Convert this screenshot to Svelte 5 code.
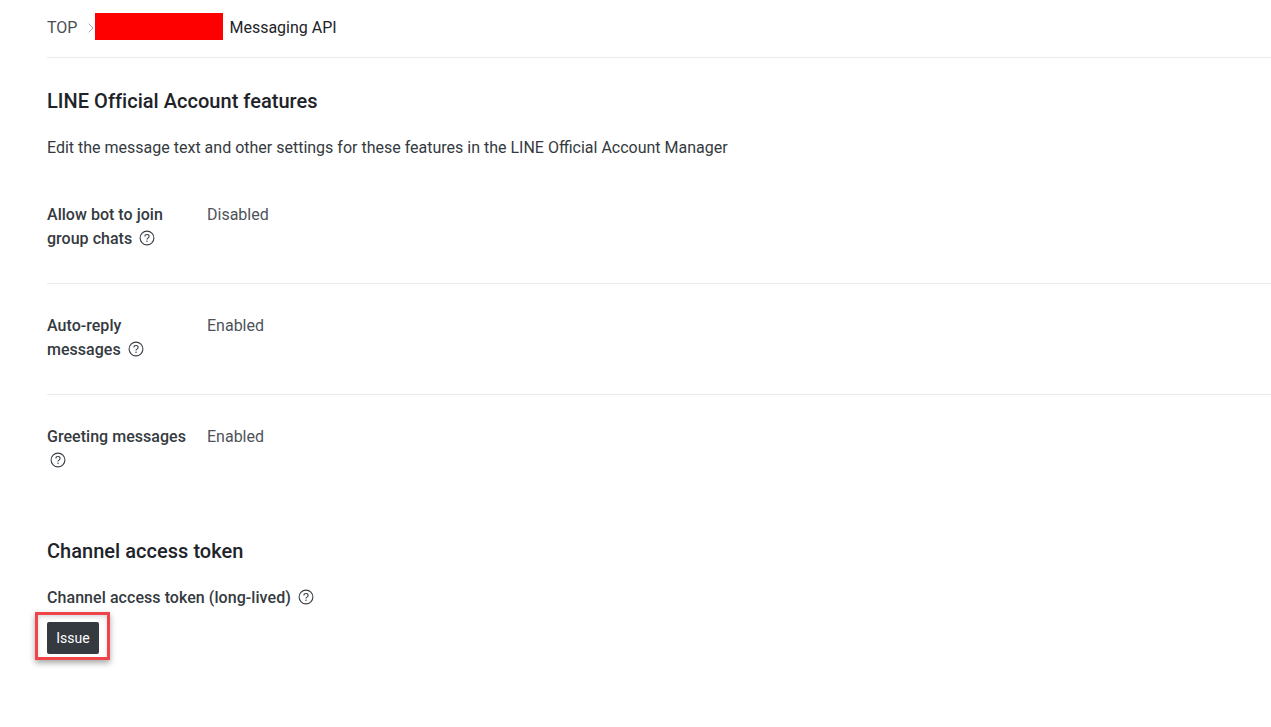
<script>
  const rows = [
    { label: 'Allow bot to join group chats', value: 'Disabled' },
    { label: 'Auto-reply messages', value: 'Enabled' },
    { label: 'Greeting messages', value: 'Enabled' }
  ];
</script>

{#snippet help()}
  <svg class="help" width="16" height="16" viewBox="0 0 16 16" aria-hidden="true">
    <circle cx="8" cy="8" r="6.9" fill="none" stroke="#3a3f46" stroke-width="1.1" />
    <path d="M5.9 6.4c0-1.2.9-1.9 2.1-1.9s2.1.7 2.1 1.8c0 .9-.5 1.3-1.2 1.8-.6.4-.9.7-.9 1.4" fill="none" stroke="#3a3f46" stroke-width="1.1" />
    <circle cx="8" cy="11.3" r=".75" fill="#3a3f46" />
  </svg>
{/snippet}

<div class="page">
  <nav class="crumbs">
    <span class="top">TOP</span>
    <svg class="chev" width="6" height="10" viewBox="0 0 6 10" aria-hidden="true"><path d="M.7.7 5 5 .7 9.3" fill="none" stroke="#a3a7ac" stroke-width="1" /></svg>
    <span class="redact"></span>
    <span class="current">Messaging API</span>
  </nav>

  <section class="features">
    <h2>LINE Official Account features</h2>
    <p class="intro">Edit the message text and other settings for these features in the LINE Official Account Manager</p>
    <dl>
      {#each rows as row}
        <div class="row">
          <dt>{row.label} {@render help()}</dt>
          <dd>{row.value}</dd>
        </div>
      {/each}
    </dl>
  </section>

  <section class="token">
    <h2>Channel access token</h2>
    <div class="token-label">Channel access token (long-lived) {@render help()}</div>
    <div class="highlight"><button type="button">Issue</button></div>
  </section>
</div>

<style>
  :global(body) {
    margin: 0;
    background: #fff;
  }
  .page {
    padding-left: 47px;
    height: 727px;
    box-sizing: border-box;
    overflow: hidden;
    font-family: Roboto, "Liberation Sans", sans-serif;
    font-size: 16px;
    line-height: 24px;
    color: #343a40;
  }
  .crumbs {
    display: flex;
    align-items: center;
    height: 55px;
    padding-bottom: 2px;
    border-bottom: 1px solid #e9eaec;
  }
  .top {
    color: #4a4f56;
  }
  .chev {
    margin-left: 11px;
    margin-right: 1px;
  }
  .redact {
    width: 128px;
    height: 27px;
    margin-top: -2px;
    background: #ff0000;
  }
  .current {
    margin-left: 6px;
    color: #1e2329;
  }
  h2 {
    margin: 0;
    font-size: 20px;
    line-height: 28px;
    font-weight: 500;
    letter-spacing: 0.03px;
    color: #1e2329;
  }
  .features {
    padding-top: 29px;
  }
  .intro {
    margin: 21px 0 0;
  }
  dl {
    margin: 13px 0 0;
  }
  .row {
    display: flex;
    padding: 30px 0 32px;
    border-bottom: 1px solid #e9eaec;
  }
  .row:last-child {
    border-bottom: 0;
    padding-bottom: 64px;
  }
  dt {
    width: 160px;
    padding-right: 20px;
    box-sizing: border-box;
    font-weight: 500;
    letter-spacing: 0.03px;
  }
  dd {
    margin: 0;
    color: #4e535a;
  }
  .help {
    vertical-align: -2px;
    margin-left: 3px;
  }
  .token-label {
    margin-top: 21px;
    font-weight: 500;
    letter-spacing: 0.06px;
  }
  .highlight {
    position: relative;
    width: 52px;
    margin-top: 12px;
  }
  .highlight::after {
    content: "";
    position: absolute;
    left: -12px;
    top: -10px;
    width: 75px;
    height: 48px;
    box-sizing: border-box;
    border: 3px solid #f0444a;
    box-shadow: 0 3px 6px rgba(0, 0, 0, 0.35), inset 0 2px 4px rgba(0, 0, 0, 0.15);
    pointer-events: none;
  }
  button {
    display: block;
    width: 52px;
    height: 32px;
    padding: 0;
    border: 0;
    border-radius: 2px;
    background: #343a40;
    color: #fff;
    font: 400 14px/32px Roboto, "Liberation Sans", sans-serif;
  }
</style>
